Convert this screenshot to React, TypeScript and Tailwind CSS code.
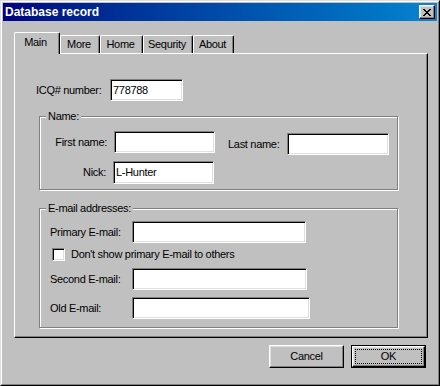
const sunken =
  "bg-white border border-t-[#808080] border-l-[#808080] border-b-white border-r-white shadow-[inset_1px_1px_0_#000,inset_-1px_-1px_0_#dfdfdf]";
const raised =
  "bg-[#c0c0c0] border border-t-white border-l-white border-r-black border-b-black shadow-[inset_-1px_-1px_0_#808080,inset_1px_1px_0_#dfdfdf]";
const etched =
  "border border-[#808080] shadow-[inset_1px_1px_0_#fff,1px_1px_0_#fff]";

const TABS = [
  { label: "Main", w: "w-[46px]" },
  { label: "More", w: "w-[40px]" },
  { label: "Home", w: "w-[43px]" },
  { label: "Sequrity", w: "w-[50px]" },
  { label: "About", w: "w-[41px]" },
];

function Field({ className, value }: { className: string; value?: string }) {
  return (
    <div className={`${sunken} ${className} flex items-center px-[2px] overflow-hidden`}>
      {value}
    </div>
  );
}

function Legend({ children }: { children: string }) {
  return (
    <span className="self-start ml-[6px] -mt-[8px] px-[2px] leading-[14px] bg-[#c0c0c0]">
      {children}
    </span>
  );
}

export default function App() {
  return (
    <div className="w-[440px] h-[386px] bg-[#c0c0c0] border border-t-[#dfdfdf] border-l-[#dfdfdf] border-r-black border-b-black font-['Liberation_Sans',Arial,sans-serif] text-[11px] tracking-[-0.3px] text-black">
      <div className="h-full border border-t-white border-l-white border-r-[#808080] border-b-[#808080] p-px flex flex-col">
        {/* Title bar */}
        <div className="h-[18px] shrink-0 flex items-center justify-between pl-[2px] pr-[2px] bg-linear-to-r from-[#000080] to-[#1084d0]">
          <span className="text-white font-bold text-[12px] tracking-normal leading-none">
            Database record
          </span>
          <div className={`${raised} w-[16px] h-[14px] flex items-center justify-center`}>
            <svg width="8" height="7" viewBox="0 0 8 7" shapeRendering="crispEdges">
              <path
                fill="#000"
                d="M0 0h2v1H0z M6 0h2v1H6z M1 1h2v1H1z M5 1h2v1H5z M2 2h4v1H2z M3 3h2v1H3z M2 4h4v1H2z M1 5h2v1H1z M5 5h2v1H5z M0 6h2v1H0z M6 6h2v1H6z"
              />
            </svg>
          </div>
        </div>

        {/* Body */}
        <div className="flex-1 flex flex-col pl-[11px] pt-[11px]">
          {/* Tabs */}
          <div className="flex items-end h-[21px]">
            {TABS.map((t, i) =>
              i === 0 ? (
                <div
                  key={t.label}
                  className={`${t.w} h-[22px] -mb-px relative z-10 bg-[#c0c0c0] border-t border-l border-r border-t-white border-l-white border-r-black rounded-t-[2px] shadow-[inset_-1px_0_0_#808080] flex items-center justify-center pb-[2px] pr-[3px]`}
                >
                  {t.label}
                </div>
              ) : (
                <div
                  key={t.label}
                  className={`${t.w} h-[18px] bg-[#c0c0c0] border-t border-l border-r border-t-white border-l-white border-r-black rounded-t-[2px] shadow-[inset_-1px_0_0_#808080] flex items-center justify-center pr-[2px]`}
                >
                  {t.label}
                </div>
              )
            )}
          </div>

          {/* Panel */}
          <div className="w-[414px] h-[285px] border border-t-white border-l-white border-r-black border-b-black shadow-[inset_-1px_-1px_0_#808080] flex flex-col">
            <div className="mt-[25px] pl-[21px] flex items-center h-[22px]">
              <span className="w-[74px]">ICQ# number:</span>
              <Field className="w-[73px] h-[22px]" value="778788" />
            </div>

            {/* Name group */}
            <div className={`${etched} mt-[15px] ml-[24px] w-[359px] h-[74px] flex flex-col`}>
              <Legend>Name:</Legend>
              <div className="mt-[8px] flex items-start">
                <span className="w-[67px] h-[22px] flex items-center justify-end">First name:</span>
                <Field className="ml-[7px] w-[101px] h-[22px]" />
                <span className="ml-[13px] mt-[2px] w-[59px] h-[22px] flex items-center">Last name:</span>
                <Field className="mt-[2px] w-[102px] h-[22px]" />
              </div>
              <div className="mt-[6px] flex items-start">
                <span className="w-[66px] h-[23px] flex items-center justify-end">Nick:</span>
                <Field className="ml-[7px] w-[101px] h-[23px]" value="L-Hunter" />
              </div>
            </div>

            {/* E-mail group */}
            <div className={`${etched} mt-[18px] ml-[24px] w-[359px] h-[120px] flex flex-col`}>
              <Legend>E-mail addresses:</Legend>
              <div className="mt-[6px] pl-[10px] flex items-center">
                <span className="w-[82px]">Primary E-mail:</span>
                <Field className="w-[174px] h-[22px]" />
              </div>
              <div className="mt-[5px] pl-[12px] flex items-center">
                <div className={`${sunken} w-[13px] h-[13px]`} />
                <span className="ml-[6px] leading-[13px]">Don't show primary E-mail to others</span>
              </div>
              <div className="mt-[7px] pl-[10px] flex items-center">
                <span className="w-[82px]">Second E-mail:</span>
                <Field className="w-[175px] h-[22px]" />
              </div>
              <div className="mt-[7px] pl-[10px] flex items-center">
                <span className="w-[82px]">Old E-mail:</span>
                <Field className="w-[178px] h-[22px]" />
              </div>
            </div>
          </div>

          {/* Buttons */}
          <div className="mt-[7px] w-[414px] flex justify-end gap-[7px] pr-[2px]">
            <div className={`${raised} w-[75px] h-[23px] flex items-center justify-center`}>
              Cancel
            </div>
            <div className="w-[75px] h-[23px] border border-black">
              <div className={`${raised} h-full p-[2px] flex`}>
                <div className="flex-1 border border-dotted border-black flex items-center justify-center">
                  OK
                </div>
              </div>
            </div>
          </div>
        </div>
      </div>
    </div>
  );
}
